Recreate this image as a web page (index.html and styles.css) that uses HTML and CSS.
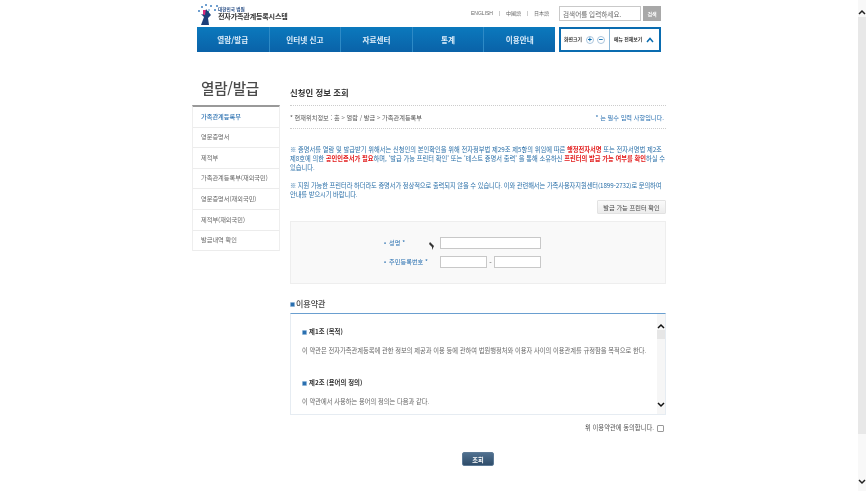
FILE: index.html
```html
<!DOCTYPE html>
<html lang="ko">
<head>
<meta charset="utf-8">
<title>신청인 정보 조회</title>
<link rel="stylesheet" href="styles.css">
</head>
<body>
<div class="page">
  <div class="wrap">
    <header class="header">
      <div class="top">
        <a class="logo">
          <svg class="logo-mark" width="22" height="23" viewBox="0 0 22 23">
            <g fill="#3f7fc0"><circle cx="2" cy="9" r="1"/><circle cx="5" cy="5" r="1"/><circle cx="9" cy="3" r="1"/><circle cx="14" cy="4" r="1"/><circle cx="18" cy="8" r="1"/><circle cx="20" cy="4" r="1"/><circle cx="12" cy="8" r=".8"/></g>
            <path d="M6 8h3v5H6z" fill="#d92b7a"/><path d="M9 9h3v4H9z" fill="#27a7a0"/>
            <path d="M9 7l5 6-3 3 1 7H4l3-8-3-3 4 1z" fill="#1d3f7a"/>
          </svg>
          <span class="logo-text"><small>대한민국 법원</small><b>전자가족관계등록시스템</b></span>
        </a>
        <div class="utility">
          <nav class="langs"><a>ENGLISH</a><i></i><a>中國語</a><i></i><a>日本語</a></nav>
          <div class="search"><input class="search-input" type="text" value="검색어를 입력하세요."><button class="search-btn">검색</button></div>
        </div>
      </div>
      <div class="bar">
        <nav class="gnb"><a>열람/발급</a><a>인터넷 신고</a><a>자료센터</a><a>통계</a><a>이용안내</a></nav>
        <div class="tools">
          <div class="zoom"><span>화면크기</span><b class="round">+</b><b class="round">−</b></div>
          <div class="all"><span>메뉴 전체보기</span>
            <svg width="8" height="6" viewBox="0 0 8 6"><path d="M1 5l3-3.5L7 5" fill="none" stroke="#0a6cb0" stroke-width="1.5"/></svg>
          </div>
        </div>
      </div>
    </header>
    <div class="body">
      <aside class="side">
        <h2 class="side-title">열람/발급</h2>
        <ul class="side-menu">
          <li class="on">가족관계등록부</li>
          <li>영문증명서</li>
          <li>제적부</li>
          <li>가족관계등록부(재외국민)</li>
          <li>영문증명서(재외국민)</li>
          <li>제적부(재외국민)</li>
          <li>발급내역 확인</li>
        </ul>
      </aside>
      <main class="main">
        <h1 class="title">신청인 정보 조회</h1>
        <div class="crumbs"><span>* 현재위치정보 : 홈 &gt; 열람 / 발급 &gt; 가족관계등록부</span><em>* 는 필수 입력 사항입니다.</em></div>
        <div class="notice">
          <p>※ 증명서를 열람 및 발급받기 위해서는 신청인의 본인확인을 위해 전자정부법 제29조 제5항의 위임에 따른 <b>행정전자서명</b> 또는 전자서명법 제2조<br>제8호에 의한 <b>공인인증서가 필요</b>하며, '발급 가능 프린터 확인' 또는 '테스트 증명서 출력' 을 통해 소유하신 <b>프린터의 발급 가능 여부를 확인</b>하실 수<br>있습니다.</p>
          <p class="tight">※ 지원 가능한 프린터라 하더라도 증명서가 정상적으로 출력되지 않을 수 있습니다. 이와 관련해서는 가족사용자지원센터(1899-2732)로 문의하여<br>안내를 받으시기 바랍니다.</p>
        </div>
        <div class="printer"><button class="printer-btn">발급 가능 프린터 확인</button></div>
        <form class="form">
          <div class="row"><label>성명 *</label><span class="cursor"><svg width="6" height="8" viewBox="0 0 6 8"><path d="M1 0l4 4-2 4 0-3-3-3z" fill="#333"/></svg></span><input class="field wide"></div>
          <div class="row"><label>주민등록번호 *</label><input class="field half"><span class="dash">-</span><input class="field half"></div>
        </form>
        <h3 class="terms-title"><i class="bullet"></i>이용약관</h3>
        <div class="terms">
          <div class="terms-text">
            <h4><i class="bullet"></i>제1조 (목적)</h4>
            <p>이 약관은 전자가족관계등록에 관한 정보의 제공과 이용 등에 관하여 법원행정처와 이용자 사이의 이용관계를 규정함을 목적으로 한다.</p>
            <h4><i class="bullet"></i>제2조 (용어의 정의)</h4>
            <p>이 약관에서 사용하는 용어의 정의는 다음과 같다.</p>
          </div>
          <div class="terms-scroll">
            <svg width="8" height="6" viewBox="0 0 8 6"><path d="M1 5l3-3 3 3" fill="none" stroke="#111" stroke-width="1.5"/></svg>
            <div class="terms-thumb"></div>
            <svg class="down" width="8" height="6" viewBox="0 0 8 6"><path d="M1 1l3 3 3-3" fill="none" stroke="#111" stroke-width="1.5"/></svg>
          </div>
        </div>
        <div class="agree"><span>위 이용약관에 동의합니다.</span><i class="check"></i></div>
        <div class="submit"><button class="submit-btn">조회</button></div>
      </main>
    </div>
  </div>
</div>
<div class="scrollbar">
  <svg width="8" height="6" viewBox="0 0 8 6"><path d="M1 5l3-3 3 3" fill="none" stroke="#222" stroke-width="1.5"/></svg>
  <div class="thumb"></div>
  <svg class="down" width="8" height="6" viewBox="0 0 8 6"><path d="M1 1l3 3 3-3" fill="none" stroke="#222" stroke-width="1.5"/></svg>
</div>
</body>
</html>
```
FILE: styles.css
```css
* { box-sizing: border-box; }
html, body { margin: 0; height: 100%; overflow: hidden; }
body { display: flex; background: #fff; color: #555; font-family: "Noto Sans CJK KR", "Noto Sans", sans-serif; font-size: 7px; line-height: 1; }
h1, h2, h3, h4, p, ul { margin: 0; padding: 0; }
i { font-style: normal; }
button, input { font-family: inherit; margin: 0; }

.page { flex: 1; min-width: 0; filter: blur(.35px); }
.wrap { width: 474px; margin: 0 auto; }

.scrollbar { width: 8px; height: 491px; background: #f8f8f8; display: flex; flex-direction: column; align-items: center; padding-top: 9px; }
.thumb { width: 8px; height: 417px; margin-top: 2px; background: #e8e8e8; }
.scrollbar .down { margin-top: auto; margin-bottom: 6px; }

.top { height: 27px; display: flex; justify-content: space-between; padding-left: 5px; }
.logo { display: flex; align-items: flex-start; padding-top: 2px; }
.logo-mark { margin-right: -1px; }
.logo-text { display: flex; flex-direction: column; padding-top: 5px; white-space: nowrap; }
.logo-text small { font-size: 4.6px; color: #2a4f86; font-weight: 700; }
.logo-text b { font-size: 7.1px; margin-top: 1.5px; color: #333; letter-spacing: -.2px; }
.utility { display: flex; align-items: flex-start; padding: 6px 5px 0 0; }
.langs { display: flex; align-items: center; height: 15px; margin-right: 10px; color: #666; font-size: 5px; font-family: "Liberation Sans", "Noto Sans CJK KR", sans-serif; }
.langs i { width: 1px; height: 5px; background: #ccc; margin: 0 6px; }
.search { display: flex; gap: 2px; }
.search-input { width: 82px; height: 15px; border: 1px solid #c9c9c9; padding: 0 3px; font-size: 6.6px; color: #666; background: #fff; outline: 0; }
.search-btn { width: 18px; height: 15px; padding: 0; border: 0; background: #a8a8a8; color: #fff; font-size: 5px; font-weight: 700; }

.bar { display: flex; justify-content: space-between; padding: 0 5px; height: 25px; }
.gnb { width: 358px; display: grid; grid-template-columns: repeat(5, 1fr); background: linear-gradient(#0b79bd, #0a62a8); }
.gnb a { display: flex; align-items: center; justify-content: center; color: #dfeefa; font-size: 7.6px; font-weight: 700; border-left: 1px solid #2e8ac6; white-space: nowrap; }
.gnb a:first-child { border-left: 0; }
.tools { width: 102px; display: flex; border: 2px solid #0a6cb0; color: #333; font-size: 4.9px; font-weight: 700; white-space: nowrap; }
.zoom { width: 49px; display: flex; align-items: center; padding-left: 3px; border-right: 1px solid #8db8d8; }
.zoom span { margin-right: 1px; }
.round { width: 8px; height: 8px; margin-left: 3px; border: 1px solid #a9c4dc; border-radius: 50%; color: #0a6cb0; display: flex; align-items: center; justify-content: center; font-size: 7px; }
.all { flex: 1; display: flex; align-items: center; padding-left: 4px; gap: 4px; }

.body { display: flex; gap: 10px; padding-top: 27px; }
.side { width: 88px; flex: none; }
.side-title { height: 26px; padding: 0 0 0 9px; font-size: 14.6px; font-weight: 500; color: #4a4a4a; line-height: 18px; letter-spacing: -.3px; white-space: nowrap; }
.side-menu { list-style: none; border-top: 2px solid #999; border-left: 1px solid #eee; border-right: 1px solid #eee; }
.side-menu li { height: 20.6px; display: flex; align-items: center; padding-left: 8px; border-bottom: 1px solid #ececec; font-size: 6.2px; color: #666; }
.side-menu .on { color: #2a70b0; font-weight: 500; }

.main { width: 376px; flex: none; }
.title { height: 27px; padding-top: 8px; border-bottom: 1px dotted #ccc; font-size: 8.4px; line-height: 11px; font-weight: 700; color: #333; }
.crumbs { height: 23px; display: flex; justify-content: space-between; align-items: center; padding: 3px 2px 0 0; border-bottom: 1px dotted #ccc; font-size: 6.2px; color: #555; }
.crumbs em { font-style: normal; color: #2a70b0; }

.notice { padding-top: 16px; color: #2a6fa8; font-size: 6.25px; line-height: 9.2px; white-space: nowrap; }
.notice p + p { margin-top: 8px; }
.notice .tight { letter-spacing: -.07px; }
.notice b { color: #e21a1a; font-weight: 700; }
.printer { display: flex; justify-content: flex-end; margin-top: 1px; }
.printer-btn { width: 69px; height: 14px; padding: 0; border: 1px solid #e2e2e2; background: linear-gradient(#fafafa, #ececec); color: #444; font-size: 6.2px; border-radius: 1px; }

.form { height: 63px; margin-top: 7px; padding: 15px 0 0 93px; background: #f9f9f9; border: 1px solid #eee; display: flex; flex-direction: column; gap: 7px; }
.row { display: flex; align-items: center; height: 12px; position: relative; }
.row label { width: 56px; flex: none; color: #2a70b0; font-size: 6.2px; }
.row label::before { content: "•"; margin-right: 3px; }
.field { height: 12px; border: 1px solid #c8c8c8; background: #fff; padding: 0; }
.wide { width: 101px; }
.half { width: 47px; }
.dash { width: 7px; text-align: center; }
.cursor { position: absolute; left: 45px; top: 5px; line-height: 0; }

.terms-title { display: flex; align-items: center; gap: 1px; height: 29px; padding-top: 11px; font-size: 8px; line-height: 10px; font-weight: 500; color: #444; }
.bullet { display: inline-block; width: 5px; height: 5px; background: #2a6fb0; border: 1px solid #8cb3d6; border-radius: 1px; flex: none; }
.terms { display: flex; height: 102px; border: 1px solid #e6ecf2; border-top: 1px solid #6a9fd0; }
.terms-text { flex: 1; min-width: 0; overflow: hidden; padding: 14px 0 0 11px; }
.terms-text h4 { display: flex; align-items: center; gap: 2px; font-size: 6.4px; line-height: 8px; font-weight: 700; color: #333; }
.terms-text p { margin-top: 11px; margin-bottom: 24px; font-size: 6.25px; line-height: 8px; color: #666; white-space: nowrap; }
.terms-scroll { width: 8px; flex: none; background: #f6f6f6; display: flex; flex-direction: column; align-items: center; padding: 9px 0 6px; }
.terms-thumb { width: 8px; height: 9px; margin-top: 1px; background: #e6e6e6; }
.terms-scroll .down { margin-top: auto; }

.agree { display: flex; justify-content: flex-end; align-items: center; gap: 3px; height: 14px; margin-top: 6px; font-size: 6.3px; color: #555; }
.check { width: 7px; height: 7px; margin-right: 2px; border: 1px solid #999; background: #fff; border-radius: 1px; }
.submit { display: flex; justify-content: center; margin-top: 17px; }
.submit-btn { width: 32px; height: 14px; padding: 0; border: 1px solid #5d7a96; border-radius: 2px; background: linear-gradient(#50708f, #2f4d6a); color: #fff; font-size: 6.2px; font-weight: 700; }
```
